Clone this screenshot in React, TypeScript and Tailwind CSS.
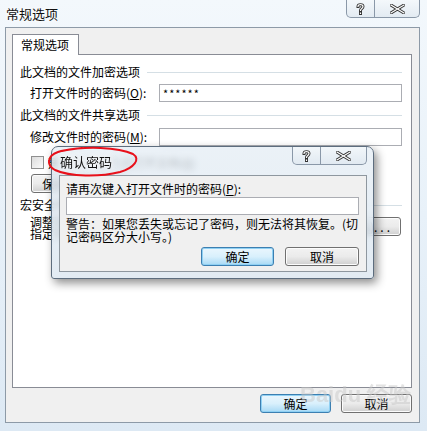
const font = "font-['SimSun','Noto_Sans_CJK_SC',sans-serif]";

const WinButton = ({ label, className = "", primary = false }: { label: React.ReactNode; className?: string; primary?: boolean }) => (
	<button
		className={
			"flex items-center justify-center rounded-[3px] border text-[12px] leading-none text-black bg-gradient-to-b " +
			(primary
				? "border-[#3c7fb1] from-[#eaf6fd] via-[#d9f0fc] to-[#a7d9f5] shadow-[inset_0_0_0_1px_#8fd0f3] "
				: "border-[#707070] from-[#f2f2f2] via-[#ebebeb] to-[#cfcfcf] shadow-[inset_0_0_0_1px_#fcfcfc] ") +
			className
		}
	>
		{label}
	</button>
);

const Caption = ({ className = "" }: { className?: string }) => (
	<div className={"flex h-[18px] rounded-b-[5px] border border-t-0 border-[#8a98a8] bg-gradient-to-b from-[#f4f8fb]/80 to-[#dfe8f0]/80 " + className}>
		<div className="flex w-[28px] items-center justify-center border-r border-[#8a98a8]">
			<svg width="9" height="12" viewBox="0 0 9 12">
				<path d="M2 3.5 C2 1 7 1 7 3.5 C7 5.5 4.5 5.5 4.5 7.5 M4.5 10 L4.5 10.5" fill="none" stroke="#333" strokeWidth="3" strokeLinecap="square" />
				<path d="M2 3.5 C2 1 7 1 7 3.5 C7 5.5 4.5 5.5 4.5 7.5 M4.5 10 L4.5 10.5" fill="none" stroke="#fff" strokeWidth="1.2" strokeLinecap="square" />
			</svg>
		</div>
		<div className="flex flex-1 items-center justify-center">
			<svg width="15" height="10" viewBox="0 0 15 10">
				<path d="M1 1 L14 9 M14 1 L1 9" stroke="#333" strokeWidth="3" strokeLinecap="square" />
				<path d="M1 1 L14 9 M14 1 L1 9" stroke="#fff" strokeWidth="1.2" strokeLinecap="square" />
			</svg>
		</div>
	</div>
);

const SectionHeader = ({ text, className = "" }: { text: string; className?: string }) => (
	<div className={"flex items-center pl-[7px] pr-[9px] text-[12px] leading-[14px] " + className}>
		<span>{text}</span>
		<div className="ml-[7px] h-px flex-1 bg-[#d5dfe5]" />
	</div>
);

const Field = ({ label, value = "", className = "" }: { label: React.ReactNode; value?: string; className?: string }) => (
	<div className={"flex items-center pl-[17px] text-[12px] " + className}>
		<div className="w-[129px] whitespace-nowrap leading-[14px]">{label}</div>
		<div className="flex h-[18px] w-[243px] items-center border border-[#abadb3] bg-white pl-[3px] text-[11px] tracking-[1px]">{value}</div>
	</div>
);

export default function App() {
	return (
		<div className={"relative h-[431px] w-[427px] overflow-hidden bg-gradient-to-b from-[#f3f8fc] via-[#e8f1f9] to-[#dde9f4] text-black " + font}>
			{/* title bar */}
			<div className="flex h-[27px] items-start justify-between">
				<div className="pl-[6px] pt-[7px] text-[13px] leading-[14px] text-[#101010] [text-shadow:0_0_6px_#fff,0_0_6px_#fff]">常规选项</div>
				<Caption className="mr-[7px] w-[74px]" />
			</div>

			{/* client area */}
			<div className="ml-[5px] h-[396px] w-[415px] border border-[#8d9aa7] bg-[#f0f0f0] pl-[6px] pt-[6px]">
				<div className="relative z-10 -mb-px flex h-[21px] w-[67px] items-center border border-b-0 border-[#898c95] bg-white pl-[8px] text-[12px]">
					常规选项
				</div>
				<div className="h-[334px] w-[400px] border border-[#898c95] bg-white pt-[10px]">
					<SectionHeader text="此文档的文件加密选项" />
					<Field className="mt-[5px]" label={<>打开文件时的密码(<u>O</u>):</>} value="******" />
					<SectionHeader className="mt-[6px]" text="此文档的文件共享选项" />
					<Field className="mt-[6px]" label={<>修改文件时的密码(<u>M</u>):</>} />
					<div className="mt-[10px] flex items-center gap-[4px] pl-[18px] text-[12px] leading-[13px]">
						<div className="h-[13px] w-[13px] border border-[#8f8f8f] bg-gradient-to-br from-[#dcdcdc] to-[#fbfbfb]" />
						<span>建议以只读方式打开文档(<u>R</u>)</span>
					</div>
					<div className="mt-[5px] pl-[18px]">
						<WinButton className="h-[19px] w-[96px]" label="保护文档(P)..." />
					</div>
					<SectionHeader className="mt-[5px]" text="宏安全性" />
					<div className="mt-[4px] flex items-start justify-between pl-[17px] pr-[10px]">
						<div className="text-[12px] leading-[12px]">
							调整可能包含宏病毒的文件的安全级别，并
							<br />
							指定可信任的宏创建者姓名。
						</div>
						<WinButton
							className="mt-px h-[19px] w-[96px] !justify-end whitespace-nowrap pr-[7px]"
							label={
								<>
									宏安全性(<u>S</u>)<span className="tracking-[3px]">...</span>
								</>
							}
						/>
					</div>
				</div>
				<div className="mt-[6px] flex w-[400px] justify-end gap-[10px]">
					<WinButton primary className="h-[19px] w-[71px]" label="确定" />
					<WinButton className="h-[19px] w-[71px]" label="取消" />
				</div>
			</div>

			{/* confirm password dialog */}
			<div className="absolute left-[51px] top-[146px] flex h-[133px] w-[323px] flex-col rounded-b-[3px] rounded-t-[7px] border border-[#5d6d7e] bg-gradient-to-b from-[#e6eef5]/80 to-[#dbe6f0]/80 shadow-[3px_4px_10px_rgba(0,0,0,0.45)] backdrop-blur-[3px]">
				<div className="flex h-[28px] items-start justify-between">
					<div className="pl-[8px] pt-[8px] text-[13px] leading-[14px] text-[#101010] [text-shadow:0_0_6px_#fff,0_0_6px_#fff]">确认密码</div>
					<Caption className="mr-[6px] w-[75px]" />
				</div>
				<div className="ml-[7px] h-[97px] w-[308px] border border-[#8e979f] bg-[#f0f0f0] pl-[6px] pt-[6px] text-[12px]">
					<div className="leading-[13px]">请再次键入打开文件时的密码(<u>P</u>):</div>
					<div className="mt-[2px] h-[18px] w-[293px] border border-[#abadb3] bg-white" />
					<div className="mt-[2px] whitespace-nowrap leading-[13px]">
						警告：如果您丢失或忘记了密码，则无法将其恢复。(切
						<br />
						记密码区分大小写。)
					</div>
					<div className="mt-[4px] flex w-[293px] justify-end gap-[11px]">
						<WinButton primary className="h-[19px] w-[73px]" label="确定" />
						<WinButton className="h-[19px] w-[74px]" label="取消" />
					</div>
				</div>
			</div>

			{/* red annotation */}
			<svg className="pointer-events-none absolute left-0 top-0" width="427" height="431" viewBox="0 0 427 431">
				<path
					d="M62 151 C85 146 118 147 133 154 C141 159 134 168 120 172 C100 177 70 177 55 170 C46 165 47 156 58 152 C66 149 75 149 82 148"
					fill="none"
					stroke="#e8101a"
					strokeWidth="2"
					strokeLinecap="round"
				/>
			</svg>

			{/* watermark */}
			<div className="pointer-events-none absolute left-[300px] top-[384px] font-['Liberation_Sans',sans-serif] text-[22px] font-bold leading-none text-[#c8c8c8]/50">
				Baidu 经验
			</div>
		</div>
	);
}
